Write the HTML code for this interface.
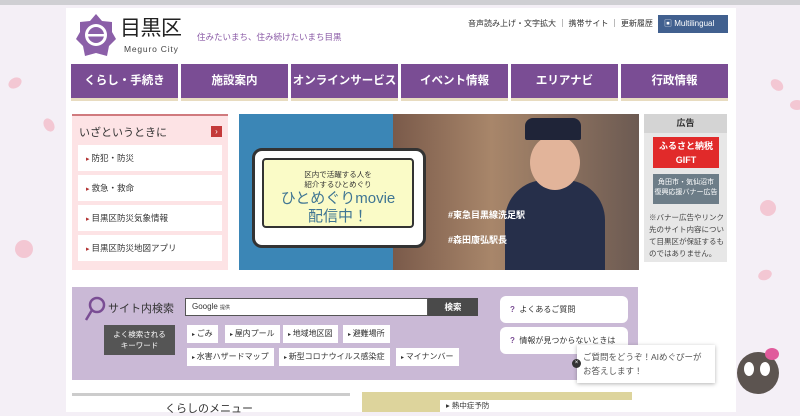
<!DOCTYPE html><html><head><meta charset="utf-8"><style>
*{margin:0;padding:0;box-sizing:border-box}
body{width:800px;height:412px;overflow:hidden;background:#f4eff6;font-family:"Liberation Sans","Noto Sans CJK JP",sans-serif;position:relative;color:#333}
.a{position:absolute}
.page{left:66px;top:8px;width:670px;height:404px;background:#fff}
.nav{top:64px;height:37px;width:107px;background:#7a4d94;color:#fff;font-size:11.5px;font-weight:bold;text-align:center;line-height:35px;border-bottom:3px solid #e8dcc0}
.li{left:78px;width:144px;height:26px;background:#fff;font-size:8.5px;line-height:26px;padding-left:8px}
.li:before{content:"▸ ";color:#b03030;font-size:7px}
.kw{height:18px;background:#fff;font-size:8px;line-height:18px;padding:0 5px}
.kw:before{content:"▸ ";font-size:6px}
.pet{width:14px;height:10px;background:#f3c7d3;border-radius:50%}
</style></head><body>
<div class="a" style="left:0;top:0;width:800px;height:5px;background:#cfcfd3"></div>
<div class="a pet" style="left:8px;top:78px;transform:rotate(-30deg)"></div>
<div class="a pet" style="left:42px;top:120px;transform:rotate(60deg)"></div>
<div class="a pet" style="left:15px;top:240px;width:18px;height:18px"></div>
<div class="a pet" style="left:760px;top:200px;width:16px;height:16px"></div>
<div class="a pet" style="left:770px;top:80px;transform:rotate(40deg)"></div>
<div class="a pet" style="left:790px;top:100px"></div>
<div class="a pet" style="left:758px;top:270px;transform:rotate(-20deg)"></div>
<div class="a page"></div>
<svg class="a" style="left:76px;top:14px" width="40" height="42" viewBox="0 0 40 42"><polygon points="20,0 26,7 36,8 36,18 40,25 33,32 31,42 20,39 9,42 7,32 0,25 4,18 4,8 14,7" fill="#8b5fa8"/><circle cx="20" cy="21" r="11" fill="#fff"/><circle cx="20" cy="21" r="8" fill="#8b5fa8"/><rect x="12" y="20" width="16" height="2.5" fill="#fff"/></svg>
<div class="a" style="left:120px;top:16px;font-size:21px;line-height:26px;color:#222;letter-spacing:-.5px">目黒区</div>
<div class="a" style="left:124px;top:44px;font-size:8.5px;color:#444;letter-spacing:.8px">Meguro City</div>
<div class="a" style="left:197px;top:31px;font-size:8.5px;color:#8a5aa6">住みたいまち、住み続けたいまち目黒</div>
<div class="a" style="left:468px;top:18px;font-size:8px;color:#333">音声読み上げ・文字拡大 ｜ 携帯サイト ｜ 更新履歴</div>
<div class="a" style="left:658px;top:15px;width:70px;height:18px;background:#41608f;color:#fff;font-size:8px;line-height:18px;padding-left:6px">▣ Multilingual</div>
<div class="a nav" style="left:71px">くらし・手続き</div>
<div class="a nav" style="left:181px">施設案内</div>
<div class="a nav" style="left:291px">オンラインサービス</div>
<div class="a nav" style="left:401px">イベント情報</div>
<div class="a nav" style="left:511px">エリアナビ</div>
<div class="a nav" style="left:621px">行政情報</div>
<div class="a" style="left:72px;top:114px;width:156px;height:156px;background:#fde3e5;border-top:2px solid #d07a7e"></div>
<div class="a" style="left:79px;top:124px;font-size:11px">いざというときに</div>
<div class="a" style="left:211px;top:126px;width:11px;height:11px;background:#c43a3a;color:#fff;font-size:8px;text-align:center;line-height:11px">›</div>
<div class="a li" style="top:145px">防犯・防災</div>
<div class="a li" style="top:175px">救急・救命</div>
<div class="a li" style="top:205px">目黒区防災気象情報</div>
<div class="a li" style="top:235px">目黒区防災地図アプリ</div>
<div class="a" style="left:239px;top:114px;width:400px;height:156px;background:#5d5f68"></div>
<div class="a" style="left:239px;top:114px;width:155px;height:156px;background:#3b86b6"></div>
<div class="a" style="left:393px;top:114px;width:246px;height:156px;background:linear-gradient(90deg,#7a5a4a,#a8866a 40%,#6c5a52)"></div>
<div class="a" style="left:505px;top:180px;width:100px;height:90px;background:#262f4a;border-radius:40px 40px 0 0"></div>
<div class="a" style="left:530px;top:135px;width:50px;height:55px;background:#e2b49a;border-radius:50%"></div>
<div class="a" style="left:525px;top:118px;width:56px;height:22px;background:#1f2438;border-radius:8px 8px 2px 2px"></div>
<div class="a" style="left:252px;top:148px;width:174px;height:100px;background:#fff;border-radius:10px;border:3px solid #333"></div>
<div class="a" style="left:262px;top:158px;width:152px;height:70px;background:#fafbc7;border:2px solid #333;border-radius:4px;text-align:center;color:#3f7593">
<div style="font-size:7.5px;margin-top:10px;color:#333;line-height:10px">区内で活躍する人を<br>紹介するひとめぐり</div>
<div style="font-size:15px;line-height:18px">ひとめぐりmovie<br>配信中！</div></div>
<div class="a" style="left:448px;top:208px;color:#fff;font-size:9px;font-weight:bold">#東急目黒線洗足駅</div>
<div class="a" style="left:448px;top:233px;color:#fff;font-size:9px;font-weight:bold">#森田康弘駅長</div>
<div class="a" style="left:644px;top:114px;width:83px;height:148px;background:#e7e7e7"></div>
<div class="a" style="left:644px;top:114px;width:83px;height:19px;background:#d4d4d4;font-size:9px;text-align:center;line-height:19px;font-weight:bold">広告</div>
<div class="a" style="left:653px;top:137px;width:66px;height:31px;background:#e12a2a;color:#fff;font-size:9px;text-align:center;line-height:14px;padding-top:2px;font-weight:bold">ふるさと納税<br>GIFT</div>
<div class="a" style="left:653px;top:174px;width:66px;height:30px;background:#6d7d88;color:#fff;font-size:7px;text-align:center;line-height:10px;padding-top:4px">角田市・気仙沼市<br>復興応援バナー広告</div>
<div class="a" style="left:649px;top:212px;width:76px;font-size:7.5px;line-height:12px;color:#444">※バナー広告やリンク先のサイト内容について目黒区が保証するものではありません。</div>
<div class="a" style="left:72px;top:287px;width:566px;height:93px;background:#cab9d6"></div>
<svg class="a" style="left:84px;top:296px" width="22" height="26"><circle cx="13" cy="9" r="7" fill="none" stroke="#7a4d94" stroke-width="2.5"/><line x1="8" y1="14" x2="2" y2="24" stroke="#7a4d94" stroke-width="2.5"/></svg>
<div class="a" style="left:108px;top:300px;font-size:11px">サイト内検索</div>
<div class="a" style="left:185px;top:298px;width:243px;height:18px;background:#fff;border:1px solid #555;font-size:8px;line-height:16px;padding-left:6px">Google <span style="font-size:5px">提供</span></div>
<div class="a" style="left:428px;top:298px;width:50px;height:18px;background:#4a4a4a;color:#fff;font-size:8.5px;text-align:center;line-height:18px;font-weight:bold">検索</div>
<div class="a" style="left:104px;top:325px;width:71px;height:30px;background:#555;color:#fff;font-size:7.5px;text-align:center;line-height:11px;padding-top:4px">よく検索される<br>キーワード</div>
<div class="a kw" style="left:187px;top:325px">ごみ</div>
<div class="a kw" style="left:225px;top:325px">屋内プール</div>
<div class="a kw" style="left:283px;top:325px">地域地区図</div>
<div class="a kw" style="left:343px;top:325px">避難場所</div>
<div class="a kw" style="left:187px;top:348px">水害ハザードマップ</div>
<div class="a kw" style="left:279px;top:348px">新型コロナウイルス感染症</div>
<div class="a kw" style="left:396px;top:348px">マイナンバー</div>
<div class="a" style="left:500px;top:296px;width:128px;height:27px;background:#fff;border-radius:6px;font-size:8px;line-height:27px;padding-left:10px"><span style="color:#7a4d94;font-weight:bold">?</span>&nbsp; よくあるご質問</div>
<div class="a" style="left:500px;top:327px;width:128px;height:27px;background:#fff;border-radius:6px;font-size:8px;line-height:27px;padding-left:10px"><span style="color:#7a4d94;font-weight:bold">?</span>&nbsp; 情報が見つからないときは</div>
<div class="a" style="left:577px;top:345px;width:138px;height:38px;background:#fff;box-shadow:0 1px 4px rgba(0,0,0,.3);font-size:8.5px;line-height:14px;padding:5px 6px;color:#555">ご質問をどうぞ！AIめぐぴーが<br>お答えします！</div>
<div class="a" style="left:572px;top:359px;width:9px;height:9px;border-radius:50%;background:#333;color:#fff;font-size:6px;text-align:center;line-height:9px">×</div>
<div class="a" style="left:737px;top:352px;width:42px;height:42px;border-radius:50%;background:#5c5450"></div>
<div class="a" style="left:744px;top:362px;width:10px;height:14px;border-radius:50%;background:#fff"></div>
<div class="a" style="left:760px;top:362px;width:10px;height:14px;border-radius:50%;background:#fff"></div>
<div class="a" style="left:765px;top:348px;width:14px;height:12px;border-radius:50%;background:#e05b9c"></div>
<div class="a" style="left:72px;top:393px;width:278px;height:3px;background:#ccc"></div>
<div class="a" style="left:165px;top:400px;font-size:11px">くらしのメニュー</div>
<div class="a" style="left:362px;top:392px;width:270px;height:20px;background:#ddd49c"></div>
<div class="a" style="left:440px;top:400px;width:192px;height:12px;background:#fff;font-size:7.5px;padding-left:6px">▸ 熱中症予防</div>
</body></html>
